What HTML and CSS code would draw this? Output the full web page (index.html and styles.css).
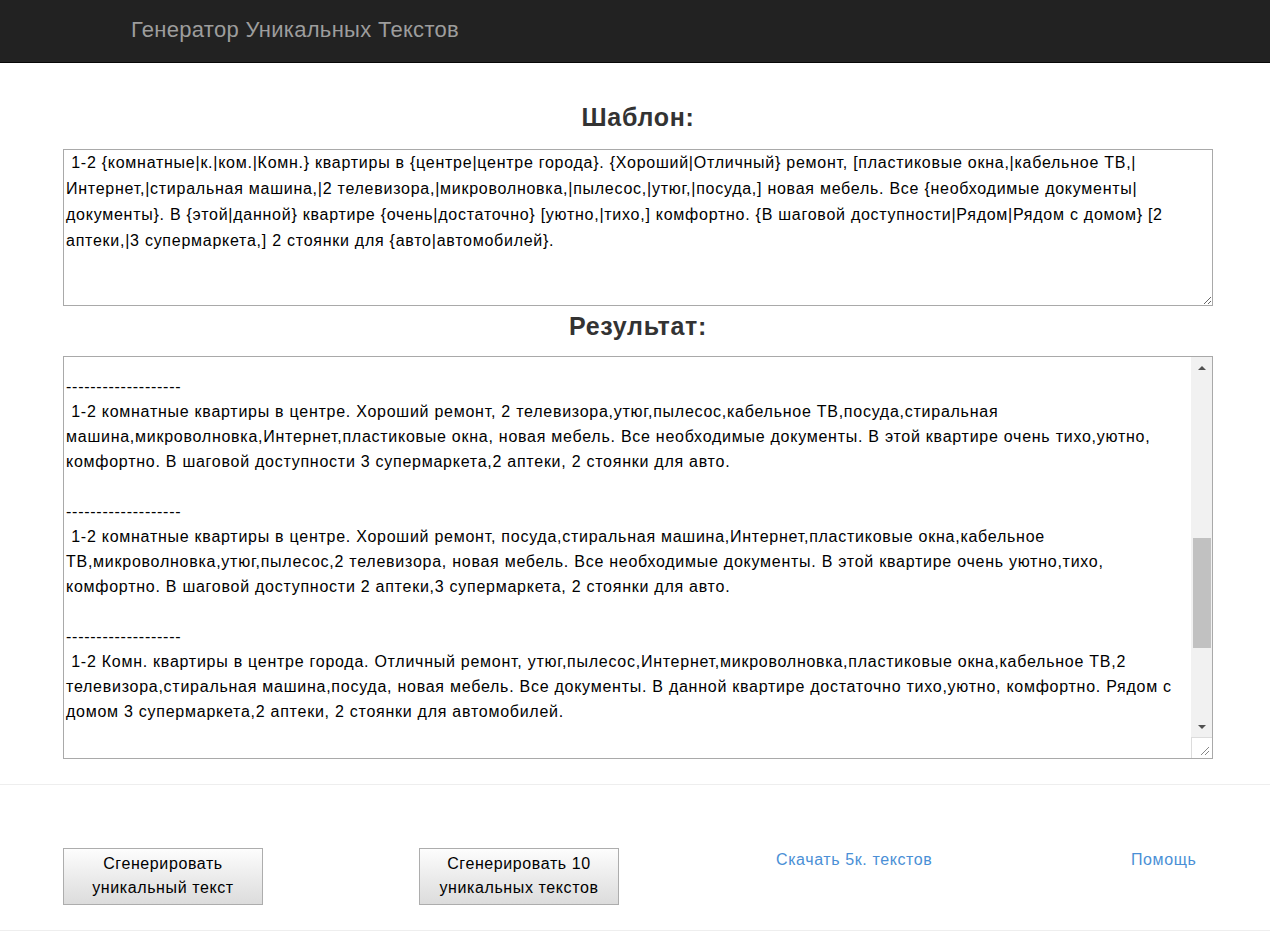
FILE: index.html
```html
<!DOCTYPE html>
<html lang="ru">
<head>
<meta charset="utf-8">
<title>Генератор Уникальных Текстов</title>
<link rel="stylesheet" href="styles.css">
</head>
<body>
<nav class="navbar"><span class="brand">Генератор Уникальных Текстов</span></nav>
<main class="container">
  <h2 class="title title-template">Шаблон:</h2>
  <textarea class="template" spellcheck="false"> 1-2 {комнатные|к.|ком.|Комн.} квартиры в {центре|центре города}. {Хороший|Отличный} ремонт, [пластиковые окна,|кабельное ТВ,|Интернет,|стиральная машина,|2 телевизора,|микроволновка,|пылесос,|утюг,|посуда,] новая мебель. Все {необходимые документы|документы}. В {этой|данной} квартире {очень|достаточно} [уютно,|тихо,] комфортно. {В шаговой доступности|Рядом|Рядом с домом} [2 аптеки,|3 супермаркета,] 2 стоянки для {авто|автомобилей}.</textarea>
  <h2 class="title title-result">Результат:</h2>
  <div class="result">
    <div class="result-text">
      <p>-------------------<br>&nbsp;1-2 комнатные квартиры в центре. Хороший ремонт, 2 телевизора,утюг,пылесос,кабельное ТВ,посуда,стиральная<br>машина,микроволновка,Интернет,пластиковые окна, новая мебель. Все необходимые документы. В этой квартире очень тихо,уютно,<br>комфортно. В шаговой доступности 3 супермаркета,2 аптеки, 2 стоянки для авто.</p>
      <p>-------------------<br>&nbsp;1-2 комнатные квартиры в центре. Хороший ремонт, посуда,стиральная машина,Интернет,пластиковые окна,кабельное<br>ТВ,микроволновка,утюг,пылесос,2 телевизора, новая мебель. Все необходимые документы. В этой квартире очень уютно,тихо,<br>комфортно. В шаговой доступности 2 аптеки,3 супермаркета, 2 стоянки для авто.</p>
      <p>-------------------<br>&nbsp;1-2 Комн. квартиры в центре города. Отличный ремонт, утюг,пылесос,Интернет,микроволновка,пластиковые окна,кабельное ТВ,2<br>телевизора,стиральная машина,посуда, новая мебель. Все документы. В данной квартире достаточно тихо,уютно, комфортно. Рядом с<br>домом 3 супермаркета,2 аптеки, 2 стоянки для автомобилей.</p>
    </div>
    <div class="scrollbar">
      <div class="sb-btn"><span class="arrow-up"></span></div>
      <div class="sb-track"><div class="sb-thumb"></div></div>
      <div class="sb-btn"><span class="arrow-down"></span></div>
      <div class="sb-corner">
        <svg width="12" height="12" viewBox="0 0 12 12"><path d="M11 3 L3 11 M11 7 L7 11" stroke="#888" stroke-width="1" fill="none"/></svg>
      </div>
    </div>
  </div>
</main>
<hr class="divider divider-top">
<section class="actions">
  <div class="col"><button class="btn">Сгенерировать<br>уникальный текст</button></div>
  <div class="col"><button class="btn">Сгенерировать 10<br>уникальных текстов</button></div>
  <div class="col"><a class="link" href="#">Скачать 5к. текстов</a></div>
  <div class="col"><a class="link" href="#">Помощь</a></div>
</section>
<hr class="divider divider-bottom">
</body>
</html>
```

FILE: styles.css
```css
html, body {
  margin: 0;
  padding: 0;
  background: #fff;
  overflow: hidden;
}
body {
  font-family: "Liberation Sans", Arial, Helvetica, sans-serif;
  font-size: 16px;
  color: #333;
}
.navbar {
  height: 62px;
  background: #222;
  border-bottom: 1px solid #080808;
  display: flex;
  align-items: center;
  padding-left: 131px;
}
.brand {
  color: #9d9d9d;
  font-size: 22px;
  letter-spacing: 0.3px;
  line-height: 24px;
  margin-top: -2px;
}
.container {
  width: 1150px;
  margin-left: 63px;
}
.title {
  margin: 0;
  font-size: 25px;
  letter-spacing: 0.7px;
  line-height: 26px;
  font-weight: bold;
  text-align: center;
  color: #333;
}
.title-template {
  margin-top: 41px;
  margin-bottom: 19px;
}
.title-result {
  margin-top: 7px;
  margin-bottom: 17px;
}
.template {
  display: block;
  box-sizing: border-box;
  width: 1150px;
  height: 157px;
  margin: 0;
  padding: 0 2px;
  border: 1px solid #a9a9a9;
  font-family: "Liberation Sans", Arial, sans-serif;
  font-size: 16px;
  letter-spacing: 0.74px;
  line-height: 26px;
  color: #000;
  resize: both;
  outline: none;
}
.result {
  box-sizing: border-box;
  height: 403px;
  border: 1px solid #a9a9a9;
  display: grid;
  grid-template-columns: 1fr 21px;
  overflow: hidden;
}
.result-text {
  overflow: hidden;
  padding: 17px 2px 0;
  color: #000;
  font-size: 16px;
  letter-spacing: 0.74px;
  line-height: 25px;
  white-space: nowrap;
}
.result-text p {
  margin: 0 0 25px;
}
.scrollbar {
  background: #f1f1f1;
  display: flex;
  flex-direction: column;
}
.sb-btn {
  height: 21px;
  display: flex;
  align-items: center;
  justify-content: center;
}
.arrow-up, .arrow-down {
  width: 0;
  height: 0;
  border-left: 4px solid transparent;
  border-right: 4px solid transparent;
}
.arrow-up {
  border-bottom: 4px solid #505050;
}
.arrow-down {
  border-top: 4px solid #505050;
}
.sb-track {
  flex: 1;
  padding: 0 1px 0 2px;
}
.sb-thumb {
  margin-top: 160px;
  height: 110px;
  background: #c1c1c1;
}
.sb-corner {
  height: 21px;
  background: #fff;
  border-top: 1px solid #dcdcdc;
  border-left: 1px solid #dcdcdc;
  display: flex;
  align-items: flex-end;
  justify-content: flex-end;
  padding: 0 2px 2px 0;
  box-sizing: border-box;
}
.divider {
  border: 0;
  border-top: 1px solid #eee;
  margin: 0;
}
.divider-top {
  margin-top: 25px;
}
.divider-bottom {
  margin-top: 25px;
}
.actions {
  display: grid;
  grid-template-columns: 356px 357px 355px 200px;
  padding-left: 63px;
  margin-top: 63px;
  align-items: start;
}
.btn {
  box-sizing: border-box;
  width: 200px;
  height: 57px;
  padding: 3px 0 4px;
  border: 1px solid #adadad;
  border-radius: 0;
  background: linear-gradient(to bottom, #fdfdfd 0%, #ececec 50%, #dcdcdc 100%);
  font-family: "Liberation Sans", Arial, sans-serif;
  font-size: 16px;
  letter-spacing: 0.6px;
  line-height: 24px;
  color: #000;
  text-align: center;
  cursor: pointer;
}
.link {
  display: inline-block;
  padding-top: 3px;
  color: #4a8fd6;
  text-decoration: none;
  font-size: 16px;
  letter-spacing: 0.6px;
  line-height: 18px;
}
```
